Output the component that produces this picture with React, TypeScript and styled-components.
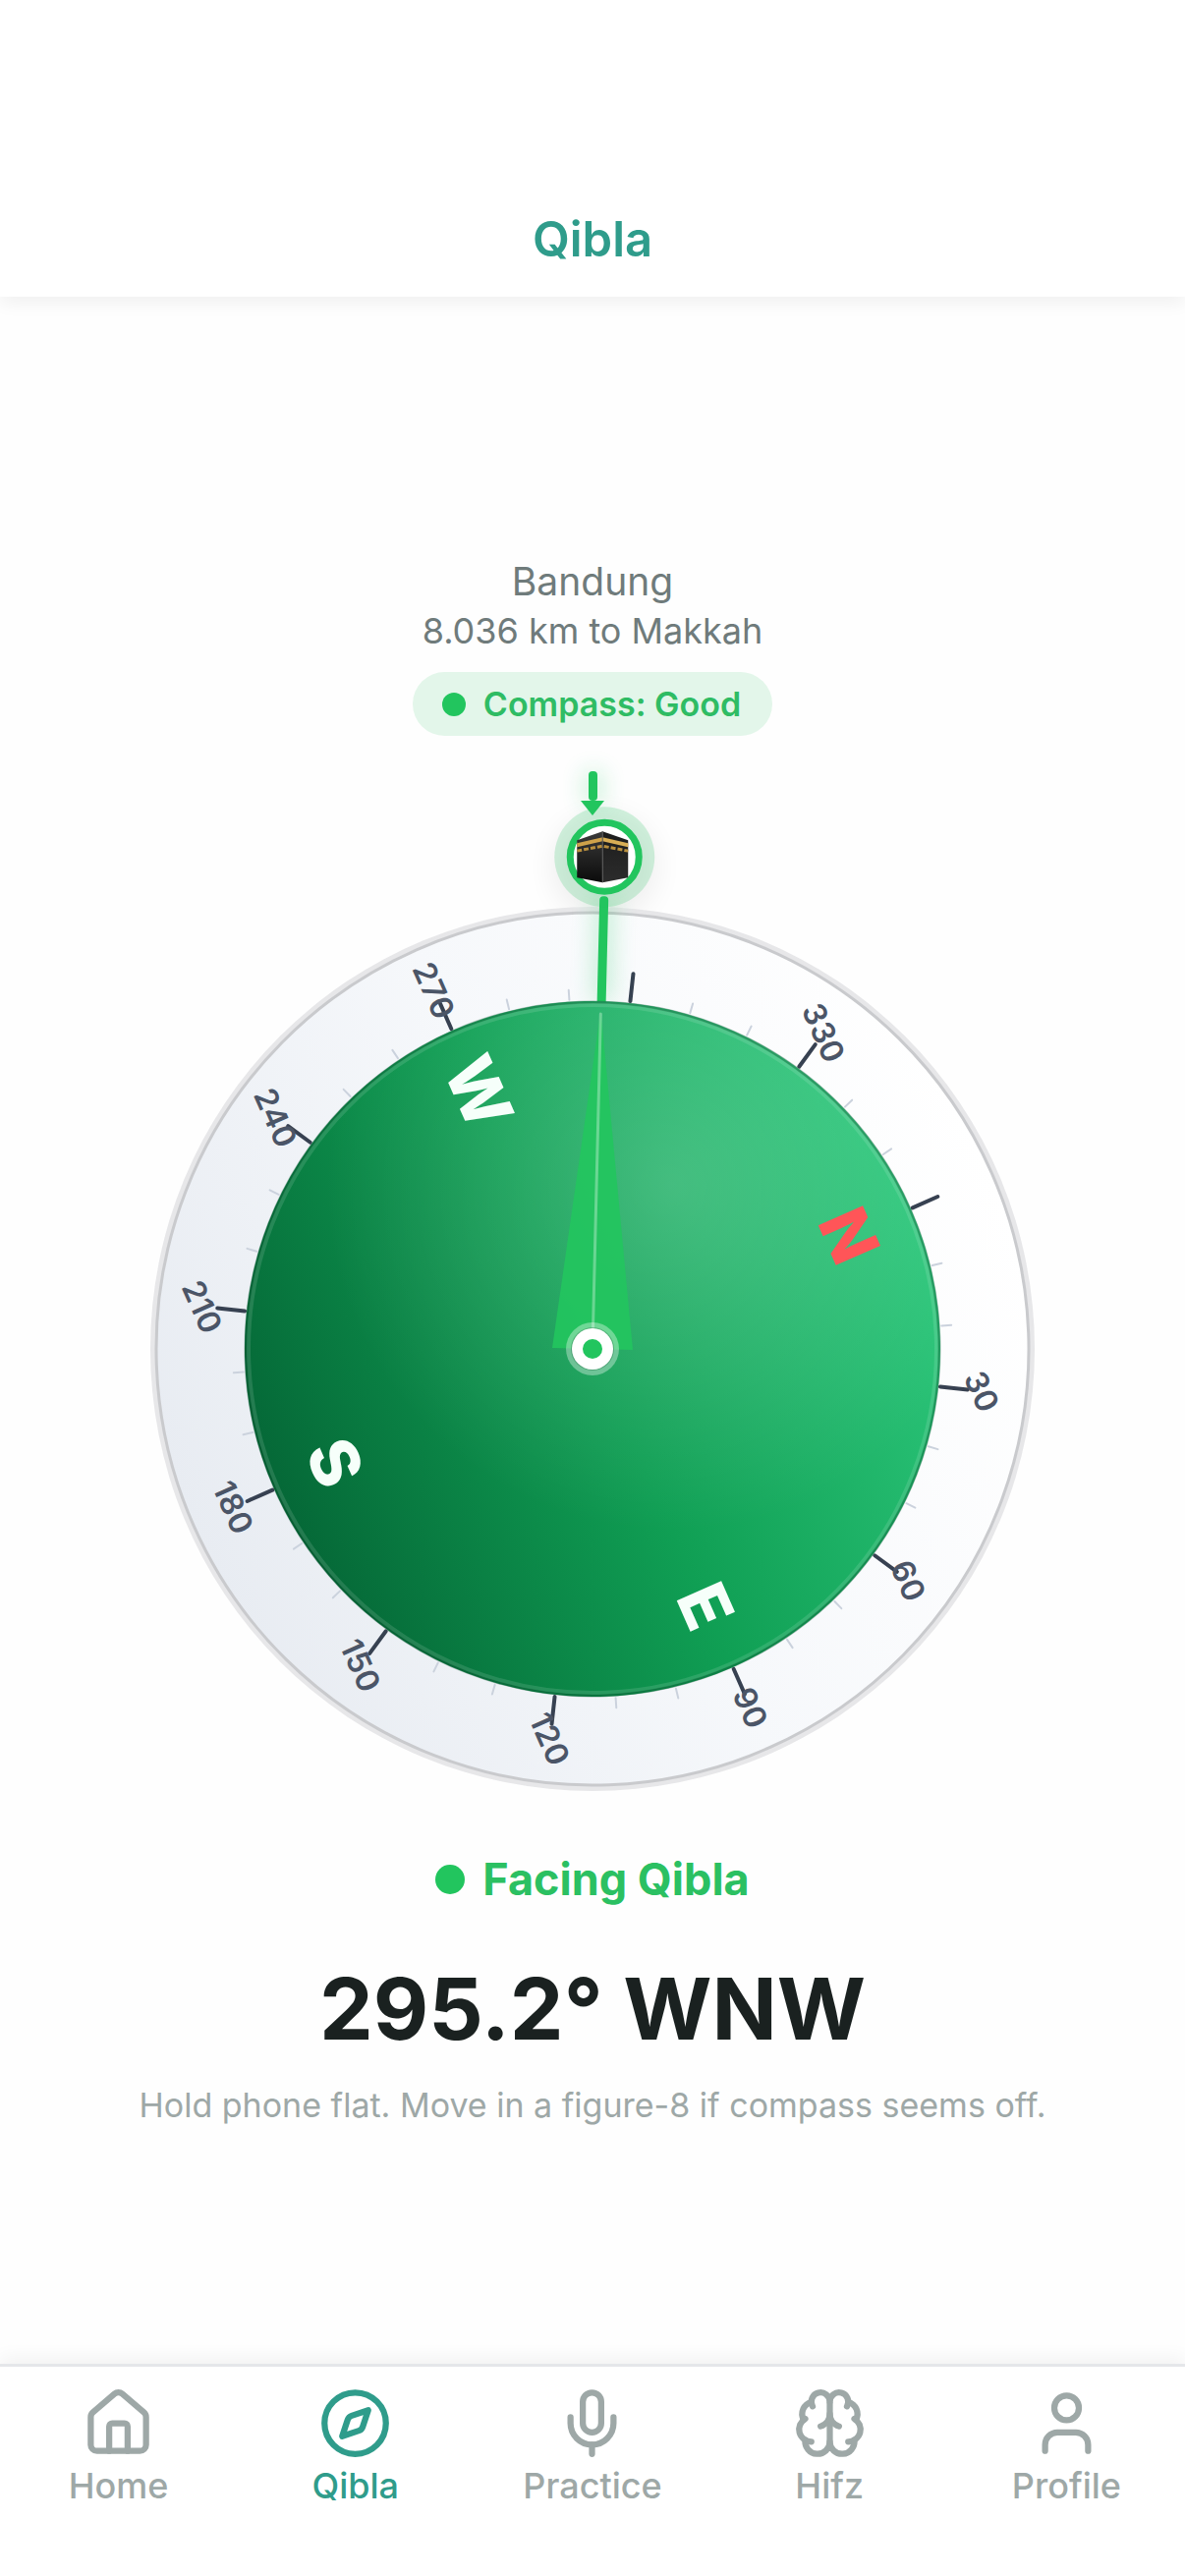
import React from "react";
import styled, { createGlobalStyle, css } from "styled-components";
import { Brain, Compass, House, Mic, User, type LucideIcon } from "lucide-react";

const colors = {
  teal: "#2f9c8b",
  green: "#22c55e",
  ink: "#1a2120",
  slate: "#6f7b7b",
  mist: "#9ea8a7",
  line: "#e5e7ea",
};

const GlobalStyle = createGlobalStyle`
  *, *::before, *::after { box-sizing: border-box; }
  body {
    margin: 0;
    background: #fefefe;
    font-family: Inter, "Liberation Sans", sans-serif;
  }
`;

const Screen = styled.div`
  display: flex;
  flex-direction: column;
  min-height: 100vh;
`;

const Header = styled.header`
  padding: 214px 24px 28px;
  background: #fff;
  text-align: center;
  box-shadow: 0 6px 18px rgba(0, 0, 0, 0.06);
`;

const Title = styled.h1`
  margin: 0;
  font-size: 49px;
  line-height: 60px;
  font-weight: 600;
  color: ${colors.teal};
`;

const Main = styled.main`
  flex: 1;
  display: flex;
  flex-direction: column;
  align-items: center;
  justify-content: center;
  padding: 22px 24px 0;
  text-align: center;
`;

const Place = styled.p<{ $size: number }>`
  margin: 0;
  font-size: ${(p) => p.$size}px;
  line-height: 51px;
  color: ${colors.slate};
`;

const AccuracyPill = styled.div`
  display: flex;
  align-items: center;
  gap: 18px;
  height: 65px;
  margin: 16px 0 36px;
  padding: 0 32px 0 30px;
  border-radius: 33px;
  background: #e3f6ea;
  color: #2fbc64;
  font-size: 34px;
  line-height: 42px;
  font-weight: 600;
`;

const Dot = styled.span<{ $size: number }>`
  width: ${(p) => p.$size}px;
  height: ${(p) => p.$size}px;
  border-radius: 50%;
  background: ${colors.green};
`;

const Dial = styled.svg`
  display: block;
  width: 100%;
  max-width: 900px;
  height: auto;
  overflow: visible;
  font-family: Inter, "Liberation Sans", sans-serif;
`;

const Status = styled.p`
  display: flex;
  align-items: center;
  gap: 18px;
  margin: 63px 0 0;
  font-size: 45px;
  line-height: 54px;
  font-weight: 700;
  color: #2bc062;
`;

const Reading = styled.p`
  margin: 51px 0 0;
  font-size: 87px;
  line-height: 108px;
  font-weight: 700;
  color: ${colors.ink};
`;

const Hint = styled.p`
  margin: 23px 0 0;
  font-size: 34px;
  line-height: 42px;
  color: ${colors.mist};
`;

const TabBar = styled.nav`
  display: grid;
  grid-template-columns: repeat(5, 1fr);
  padding: 20px 0 71px;
  border-top: 3px solid ${colors.line};
  background: #fff;
  box-shadow: 0 -6px 18px rgba(0, 0, 0, 0.05);
`;

const Tab = styled.a<{ $active: boolean }>`
  display: flex;
  flex-direction: column;
  align-items: center;
  gap: 5px;
  color: ${colors.mist};
  font-size: 36px;
  line-height: 42px;
  font-weight: 500;
  text-decoration: none;
  ${(p) => p.$active && css`color: ${colors.teal};`}
`;

const HEADING = 66.2;
const QIBLA = 295.2;

const range = (from: number, to: number, step: number) => {
  const out: number[] = [];
  for (let v = from; v < to; v += step) out.push(v);
  return out;
};

const polar = (deg: number, r: number) => {
  const a = (deg * Math.PI) / 180;
  return { x: Math.sin(a) * r, y: -Math.cos(a) * r };
};

const cardinals = [
  { letter: "N", deg: 0, fill: "#ff5558" },
  { letter: "E", deg: 90, fill: "#f6fffa" },
  { letter: "S", deg: 180, fill: "#f6fffa" },
  { letter: "W", deg: 270, fill: "#f6fffa" },
];

function Kaaba() {
  return (
    <g>
      <path d="M-26 -17 L0 -26 V26 L-26 21 Z" fill="url(#wallLeft)" />
      <path d="M0 -26 L26 -17 V21 L0 26 Z" fill="url(#wallRight)" />
      <path d="M-26 -14 L0 -20 V-16 L-26 -10 Z" fill="#cfa24a" />
      <path d="M0 -20 L26 -14 V-10 L0 -16 Z" fill="#d9ae55" />
      <path d="M-26 -6 L0 -11 L26 -6" fill="none" stroke="#b98f3e" strokeWidth="3" strokeDasharray="5 2" />
      <path d="M0 -26 V26" stroke="#5a5a5a" strokeWidth="1" />
    </g>
  );
}

function CompassDial() {
  const marker = polar(HEADING + QIBLA, 501);
  return (
    <Dial viewBox="0 0 900 1038" role="img" aria-label="Compass pointing to the Qibla">
      <defs>
        <linearGradient id="bezel" x1="0" y1="0" x2="0" y2="1">
          <stop offset="0" stopColor="#ffffff" />
          <stop offset="0.5" stopColor="#f6f8fb" />
          <stop offset="1" stopColor="#e8ecf2" />
        </linearGradient>
        <linearGradient id="face" x1="0" y1="0" x2="0" y2="1">
          <stop offset="0" stopColor="#2cc67a" />
          <stop offset="0.5" stopColor="#109f54" />
          <stop offset="1" stopColor="#056837" />
        </linearGradient>
        <radialGradient id="sheen" cx="0.33" cy="0.3" r="0.5">
          <stop offset="0" stopColor="#fff" stopOpacity="0.18" />
          <stop offset="1" stopColor="#fff" stopOpacity="0" />
        </radialGradient>
        <linearGradient id="wallLeft" x1="0" y1="0" x2="0" y2="1">
          <stop offset="0" stopColor="#3a3a3a" />
          <stop offset="1" stopColor="#0b0b0b" />
        </linearGradient>
        <linearGradient id="wallRight" x1="0" y1="0" x2="0" y2="1">
          <stop offset="0" stopColor="#1c1c1c" />
          <stop offset="1" stopColor="#2c2c2c" />
        </linearGradient>
        <filter id="soft" x="-60" y="-640" width="140" height="340" filterUnits="userSpaceOnUse">
          <feGaussianBlur stdDeviation="12" />
        </filter>
        <filter id="shade" x="-50%" y="-50%" width="200%" height="200%">
          <feGaussianBlur stdDeviation="14" />
        </filter>
      </defs>

      <g transform="translate(450 588)">
        <circle cx={marker.x} cy={marker.y + 10} r="54" fill="#000" opacity="0.06" filter="url(#shade)" />
        <circle r="450" fill="#e7e7e9" />
        <g transform={`rotate(${HEADING})`}>
          <circle r="445" fill="url(#bezel)" />
          <circle r="444" fill="none" stroke="#c9cacd" strokeWidth="3" />
          {range(0, 360, 10).map((deg) => {
            const major = deg % 30 === 0;
            return (
              <line
                key={deg}
                x1="0"
                x2="0"
                y1={major ? -384 : -366}
                y2={-356}
                stroke={major ? "#374151" : "#cbd2dd"}
                strokeWidth={major ? 4 : 2}
                strokeLinecap="round"
                transform={`rotate(${deg})`}
              />
            );
          })}
          {range(30, 360, 30)
            .filter((deg) => deg !== 300)
            .map((deg) => {
              const p = polar(deg, 399);
              return (
                <text key={deg} x={p.x} y={p.y + 12} textAnchor="middle" fontSize="32" fontWeight="600" fill="#4b5567">
                  {deg}
                </text>
              );
            })}
        </g>

        <g transform={`rotate(${HEADING + QIBLA})`}>
          <rect x="-6" y="-462" width="14" height="110" rx="7" fill={colors.green} opacity="0.35" filter="url(#soft)" />
          <rect x="-4" y="-461" width="9" height="120" rx="4" fill={colors.green} />
        </g>

        <g transform={`rotate(${HEADING})`}>
          <circle r="354" fill="url(#face)" />
          <circle r="354" fill="url(#sheen)" />
          <circle r="353" fill="none" stroke="#064d2a" strokeOpacity="0.35" strokeWidth="3" />
          <circle r="350" fill="none" stroke="#fff" strokeOpacity="0.12" strokeWidth="4" />
          {cardinals.map(({ letter, deg, fill }) => {
            const p = polar(deg, 286);
            return (
              <text key={letter} x={p.x} y={p.y + 25} textAnchor="middle" fontSize="68" fontWeight="800" fill={fill}>
                {letter}
              </text>
            );
          })}
        </g>

        <g transform={`rotate(${HEADING + QIBLA})`}>
          <path d="M-41 0 L0 -345 L41 0 Z" fill={colors.green} opacity="0.9" />
          <line x1="0" x2="0" y1="-341" y2="0" stroke="#fff" strokeOpacity="0.32" strokeWidth="3" strokeLinecap="round" />
        </g>
        <circle r="27" fill="#fff" opacity="0.35" />
        <circle r="22" fill="#0b5a30" opacity="0.3" />
        <circle r="21" fill="#fff" />
        <circle r="10" fill={colors.green} />

        <g transform={`translate(${marker.x} ${marker.y})`}>
          <circle r="51" fill={colors.green} opacity="0.2" />
          <circle r="35" fill="#fff" stroke={colors.green} strokeWidth="7" />
          <g transform="translate(-2 0)">
            <Kaaba />
          </g>
        </g>

        <rect x="-6" y="-588" width="14" height="34" rx="7" fill={colors.green} opacity="0.35" filter="url(#soft)" />
        <rect x="-4" y="-588" width="9" height="30" rx="4" fill={colors.green} />
        <path d="M-12 -558 H12 L0 -543 Z" fill={colors.green} />
      </g>
    </Dial>
  );
}

const tabs: { label: string; icon: LucideIcon }[] = [
  { label: "Home", icon: House },
  { label: "Qibla", icon: Compass },
  { label: "Practice", icon: Mic },
  { label: "Hifz", icon: Brain },
  { label: "Profile", icon: User },
];

export default function App() {
  const active = "Qibla";
  return (
    <Screen>
      <GlobalStyle />
      <Header>
        <Title>Qibla</Title>
      </Header>
      <Main>
        <Place $size={39}>Bandung</Place>
        <Place $size={36}>8.036 km to Makkah</Place>
        <AccuracyPill>
          <Dot $size={24} />
          Compass: Good
        </AccuracyPill>
        <CompassDial />
        <Status>
          <Dot $size={30} />
          Facing Qibla
        </Status>
        <Reading>295.2° WNW</Reading>
        <Hint>Hold phone flat. Move in a figure-8 if compass seems off.</Hint>
      </Main>
      <TabBar aria-label="Main">
        {tabs.map(({ label, icon: Icon }) => (
          <Tab
            key={label}
            href={`#${label.toLowerCase()}`}
            $active={label === active}
            aria-current={label === active ? "page" : undefined}
          >
            <Icon size={75} strokeWidth={2} aria-hidden />
            {label}
          </Tab>
        ))}
      </TabBar>
    </Screen>
  );
}
